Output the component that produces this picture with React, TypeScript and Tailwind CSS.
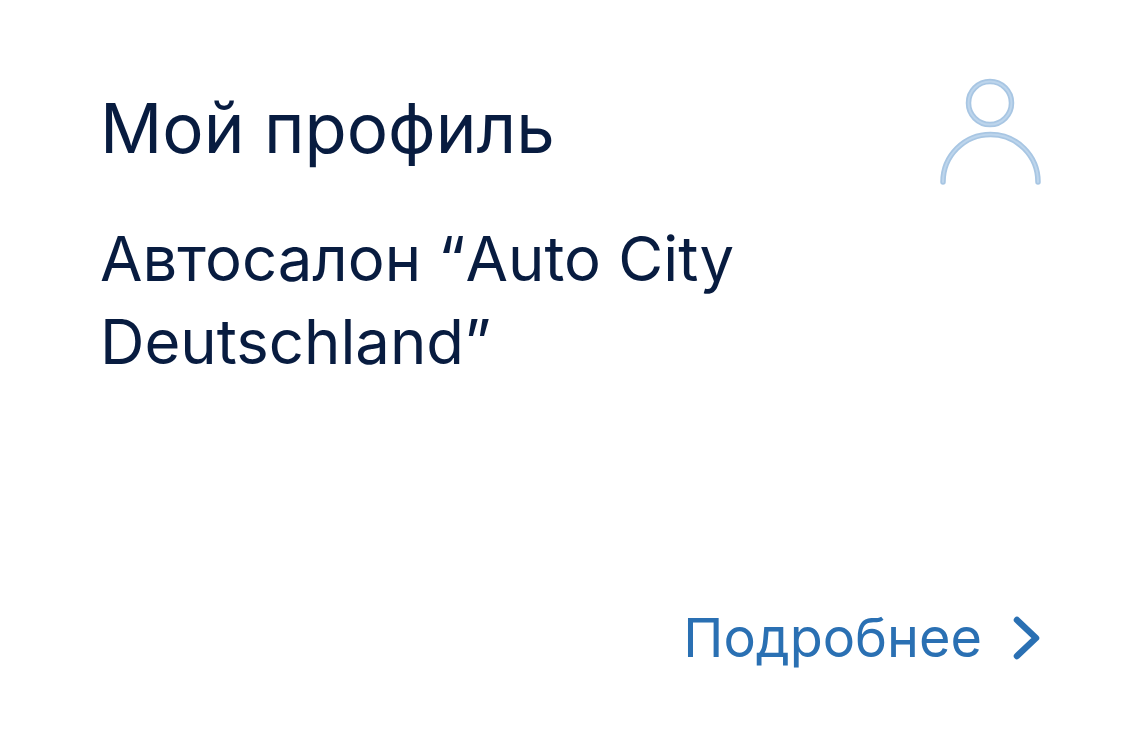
function ProfileIcon() {
  return (
    <svg width="104" height="110" viewBox="0 0 104 110" fill="none" className="shrink-0">
      <circle cx="51" cy="25" r="21.5" stroke="#a8c6e3" strokeWidth="5.5" />
      <circle cx="51" cy="25" r="21.5" stroke="#bdd5ec" strokeWidth="2" />
      <path d="M4 104 A47.5 47.5 0 0 1 99 104" stroke="#a8c6e3" strokeWidth="5.5" strokeLinecap="round" />
      <path d="M4 104 A47.5 47.5 0 0 1 99 104" stroke="#bdd5ec" strokeWidth="2" strokeLinecap="round" />
    </svg>
  );
}

function Chevron() {
  return (
    <svg width="30" height="44" viewBox="0 0 30 44" fill="none" className="shrink-0">
      <path d="M4 4 L23 22 L4 40" stroke="#2a70b3" strokeWidth="6.5" strokeLinecap="round" strokeLinejoin="round" />
    </svg>
  );
}

export default function App() {
  return (
    <div className="w-[1140px] h-[756px] bg-white flex flex-col justify-between pl-[100px] pr-[97px] pt-[78px] pb-[83px] font-['Inter',sans-serif]">
      <div className="flex items-start justify-between">
        <div className="w-[700px]">
          <h1 className="text-[69px] leading-[100px] font-normal text-[#081c40]">Мой профиль</h1>
          <p className="mt-[39px] text-[61.6px] leading-[83px] text-[#081c40]">Автосалон “Auto City Deutschland”</p>
        </div>
        <ProfileIcon />
      </div>
      <div className="flex items-center justify-end gap-[31px]">
        <span className="text-[54px] leading-[70px] text-[#2a70b3]">Подробнее</span>
        <Chevron />
      </div>
    </div>
  );
}
